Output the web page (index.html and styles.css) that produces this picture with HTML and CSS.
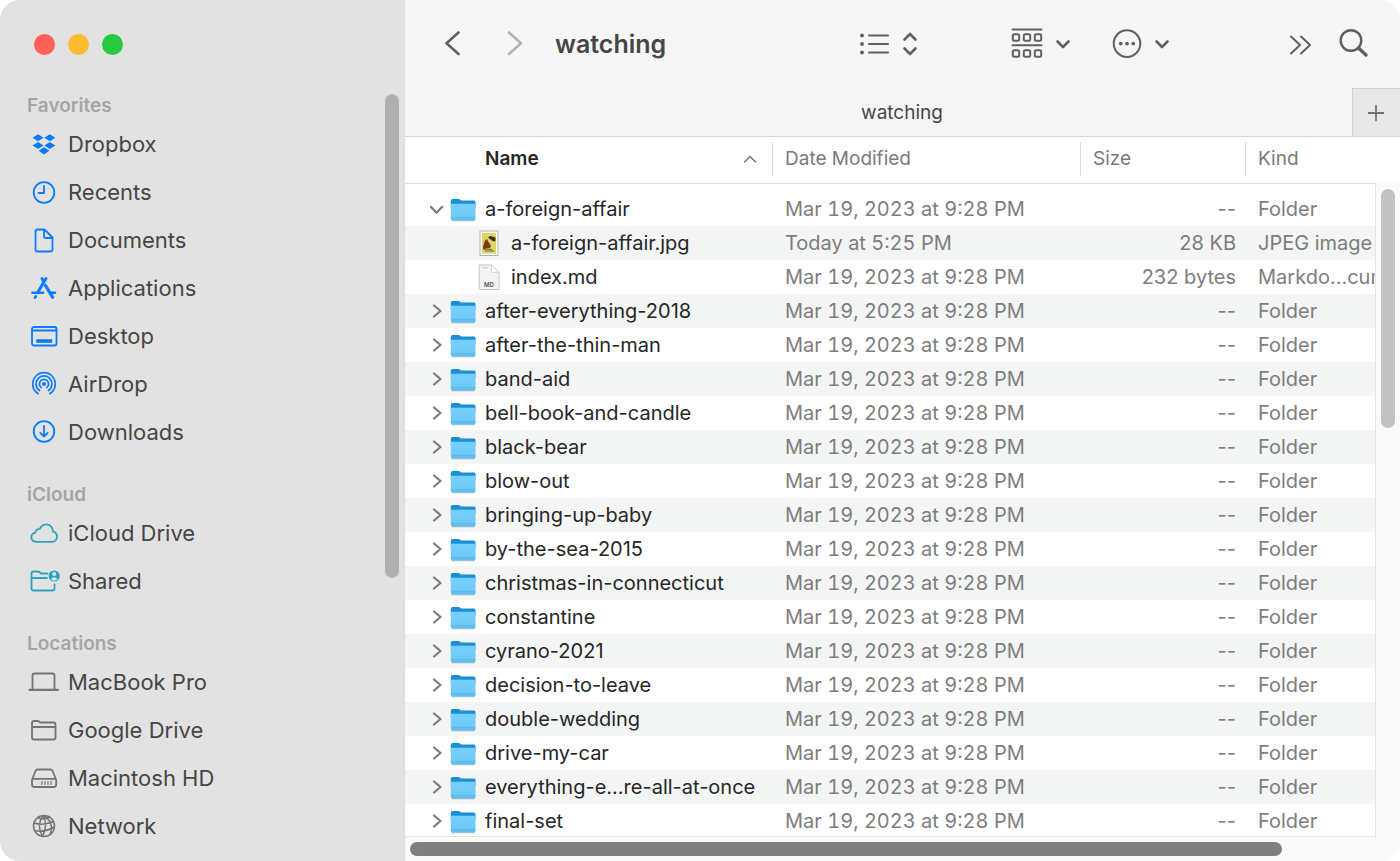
FILE: index.html
```html
<!DOCTYPE html>
<html lang="en">
<head>
<meta charset="utf-8">
<meta name="viewport" content="width=device-width, initial-scale=1">
<title>watching</title>
<link rel="stylesheet" href="styles.css">
</head>
<body>
<svg class="defs" width="0" height="0" aria-hidden="true">
  <defs>
    <linearGradient id="folder-front" x1="0" y1="0" x2="0" y2="1">
      <stop offset="0" stop-color="#79cffb"/><stop offset="0.7" stop-color="#6fcbfa"/><stop offset="1" stop-color="#5fbdee"/>
    </linearGradient>
    <symbol id="folder" viewBox="0 0 26 26">
      <path d="M1.5 24.7h23.4" stroke="#8f9aa0" stroke-width="1.2" opacity=".6"/>
      <path d="M.8 4.7Q.8 2.900 2.500 2.900H8.300Q9.300 2.900 10 3.600L11 4.600H24Q25.500 4.600 25.500 6.100V12H.8Z" fill="#1b8fd6"/>
      <path d="M.8 7.700H25.500V22.700Q25.500 24.400 23.800 24.400H2.500Q.8 24.400 .8 22.700Z" fill="url(#folder-front)"/>
      <path d="M1 21.700H25.300" stroke="#52b3e6" stroke-width=".7"/>
    </symbol>
    <symbol id="closed" viewBox="0 0 14 14"><path d="M4 1.500 10.500 7 4 12.500" fill="none" stroke="currentColor" stroke-width="2.200" stroke-linecap="round" stroke-linejoin="round"/></symbol>
    <symbol id="open" viewBox="0 0 14 14"><path d="M.8 4.800 6.500 10.800 12.200 4.800" fill="none" stroke="currentColor" stroke-width="2.200" stroke-linecap="round" stroke-linejoin="round"/></symbol>
    <symbol id="jpeg" viewBox="0 0 26 28">
      <rect x="4" y="2" width="18" height="24.500" fill="#fff" stroke="#b5b5b0" stroke-width="1"/>
      <rect x="5.800" y="3.800" width="14.400" height="20.800" fill="#ddd463"/>
      <path d="M7 17.500 9 11.500 11 10 12.500 13 15 16.500 14 19 10 19.500 7.500 21Z" fill="#7c3a25"/>
      <path d="M12 8.500 14.500 7 19.500 8.500V12.500L16.500 12Z" fill="#3b3420"/>
      <path d="M9 22H18M8 20 16 20.500" stroke="#66703a" stroke-width="1.200"/>
    </symbol>
    <symbol id="markdown" viewBox="0 0 26 28">
      <path d="M3.200 2H15.500L23 9.500V25.700Q23 26.500 22.200 26.500H4Q3.200 26.500 3.200 25.700Z" fill="#f5f5f5" stroke="#c2c2c2"/>
      <path d="M15.500 2V8.300Q15.500 9.500 16.700 9.500H23Z" fill="#fff" stroke="#cfcfcf" stroke-width=".8"/>
      <path d="M6 4.800H12" stroke="#c6c6c6"/>
      <text x="13" y="23.500" text-anchor="middle" class="md-mark">MD</text>
    </symbol>
  </defs>
</svg>

<div class="window">
  <aside class="sidebar">
    <div class="lights">
      <button class="light close" aria-label="Close"></button>
      <button class="light minimize" aria-label="Minimize"></button>
      <button class="light zoom" aria-label="Zoom"></button>
    </div>
    <div class="side-body">
      <nav class="nav" aria-label="Sidebar">
        <h2 class="group">Favorites</h2>
        <ul class="places blue">
          <li><a class="place" href="#"><svg class="ico" viewBox="0 0 32 28" fill="currentColor"><path d="M10 4.300 15.500 7.800 10 11.300 4.500 7.800ZM21.800 4.300 27.300 7.800 21.800 11.300 16.300 7.800ZM10 12 15.500 15.500 10 19 4.500 15.500ZM21.800 12 27.300 15.500 21.800 19 16.300 15.500ZM16 17.200 21.400 20.800 16 24.400 10.600 20.800Z"/></svg>Dropbox</a></li>
          <li><a class="place" href="#"><svg class="ico line" viewBox="0 0 32 28"><circle cx="16" cy="14.500" r="10.300"/><path d="M16 8V15H10.500"/></svg>Recents</a></li>
          <li><a class="place" href="#"><svg class="ico line" viewBox="0 0 32 28"><path d="M9.500 3.500H16.500L24.500 11.500V23.500Q24.500 25.500 22.500 25.500H9.500Q7.500 25.500 7.500 23.500V5.500Q7.500 3.500 9.500 3.500Z"/><path d="M16 4V10.500Q16 12 17.500 12H24"/></svg>Documents</a></li>
          <li><a class="place" href="#"><svg class="ico line" viewBox="0 0 32 28"><path d="M14 4.500 16 8M18 4.500 9.500 18.800" stroke-width="3"/><path d="M4.500 18.800H15M23.500 18.800H27" stroke-width="2.600"/><path d="M17.500 11.500 24.600 23.200" stroke-width="3.200"/><path d="M7.700 22.400 7 23.600" stroke-width="2.800"/></svg>Applications</a></li>
          <li><a class="place" href="#"><svg class="ico line" viewBox="0 0 32 28"><rect x="4" y="5" width="24.500" height="18.500" rx="2"/><path d="M4 8.500H28.500"/><path d="M8.300 19H24.200" stroke-width="3.600" stroke-linecap="butt"/></svg>Desktop</a></li>
          <li><a class="place" href="#"><svg class="ico line" viewBox="0 0 32 28"><circle cx="16" cy="14" r="2" fill="currentColor" stroke="none"/><path d="M13.100 17.500A4.600 4.600 0 1 1 18.900 17.500M11.500 20.500A8 8 0 1 1 20.500 20.500M10.200 23.700A11.300 11.300 0 1 1 21.800 23.700" stroke-width="1.700"/></svg>AirDrop</a></li>
          <li><a class="place" href="#"><svg class="ico line" viewBox="0 0 32 28"><circle cx="16" cy="13.500" r="10.300"/><path d="M16 8V18.300M12.300 14.800 16 18.500 19.700 14.800"/></svg>Downloads</a></li>
        </ul>
        <h2 class="group">iCloud</h2>
        <ul class="places teal">
          <li><a class="place" href="#"><svg class="ico line" viewBox="0 0 32 28"><path d="M8.500 22.800Q3.300 22.500 3.300 18.300Q3.500 14.500 7.300 13.700Q7.800 9.700 11.800 9.800Q14 5.200 18.500 5.300Q24.300 5.900 25 12.300Q29.200 13.800 29 18Q28.500 22.600 24 22.800Z"/></svg>iCloud Drive</a></li>
          <li><a class="place" href="#"><svg class="ico line" viewBox="0 0 32 28"><path d="M19.500 6.500H13Q11.500 4.500 9.500 4.500H5.500Q3.500 4.500 3.500 6.500V21.500Q3.500 23.500 5.500 23.500H24.500Q26.500 23.500 26.500 21.500V17.500M3.500 11H19"/><circle cx="26.200" cy="9" r="5.600" fill="currentColor" stroke="none"/><circle cx="26.200" cy="7" r="2" fill="#e2e2e2" stroke="none"/><path d="M22.800 12.300Q26.200 8.300 29.600 12.300Q26.200 15 22.800 12.300Z" fill="#e2e2e2" stroke="none"/></svg>Shared</a></li>
        </ul>
        <h2 class="group">Locations</h2>
        <ul class="places gray">
          <li><a class="place" href="#"><svg class="ico line" viewBox="0 0 32 28"><path d="M4.500 21V7.500Q4.500 5.500 6.500 5.500H24.500Q26.500 5.500 26.500 7.500V21"/><path d="M1.500 21.800H30" stroke-width="2.200"/></svg>MacBook Pro</a></li>
          <li><a class="place" href="#"><svg class="ico line" viewBox="0 0 32 28"><path d="M4 7Q4 5 6 5H9.500Q11 5 12.500 6.500H25.500Q27.500 6.500 27.500 8.500V21.500Q27.500 23.500 25.500 23.500H6Q4 23.500 4 21.500ZM4 11H27.500"/></svg>Google Drive</a></li>
          <li><a class="place" href="#"><svg class="ico line" viewBox="0 0 32 28"><path d="M9.500 5.500H22.500Q24 5.500 24.600 7L28.200 16V20.500Q28.200 23 25.700 23H6.500Q4 23 4 20.500V16L7.500 7Q8 5.500 9.500 5.500ZM4.500 14.800H27.700"/><path d="M14 17.500V20.500M17 17.500V20.500M20 17.500V20.500M23 17.500V20.500" stroke-width="1.200"/></svg>Macintosh HD</a></li>
          <li><a class="place" href="#"><svg class="ico line" viewBox="0 0 32 28"><g stroke-width="1.500"><circle cx="16" cy="14" r="10.500"/><path d="M15 3.700Q8 13 14.500 24.300M15 3.700Q20.500 13 14.500 24.300M15 3.700Q27 9.500 22 22.500M6 11Q15 14 25.500 9.500M6.500 18.500Q16 21 26.300 15M10 5.500Q15 8.500 21.500 5"/></g></svg>Network</a></li>
        </ul>
      </nav>
      <div class="side-scroll"><div class="thumb side-thumb"></div></div>
    </div>
  </aside>

  <main class="main">
    <header class="toolbar">
      <button class="tool back" aria-label="Back"><svg width="16" height="28" viewBox="0 0 16 28"><path d="M13.500 2.500 1.500 13.300 13.500 24"/></svg></button>
      <button class="tool forward" aria-label="Forward" disabled><svg width="16" height="28" viewBox="0 0 16 28"><path d="M2 2.500 14 13.300 2 24"/></svg></button>
      <h1 class="title">watching</h1>
      <button class="tool view" aria-label="View as list">
        <svg width="30" height="30" viewBox="0 0 30 30"><path d="M9 6.500H28M9 15H28M9 23.500H28" stroke-width="2"/><g class="dots"><circle cx="2" cy="6.500" r="1.900"/><circle cx="2" cy="15" r="1.900"/><circle cx="2" cy="23.500" r="1.900"/></g></svg>
        <svg width="16" height="30" viewBox="0 0 16 30"><path d="M2.500 10.500 8 5 13.500 10.500M2.500 19.500 8 25 13.500 19.500"/></svg>
      </button>
      <button class="tool arrange" aria-label="Group items">
        <svg width="32" height="32" viewBox="0 0 32 32"><g stroke-width="2"><path d="M1.500 1.500H30.500M1.500 17.300H30.500"/><rect x="1.800" y="6.300" width="6.400" height="6.400" rx="1.500"/><rect x="12.800" y="6.300" width="6.400" height="6.400" rx="1.500"/><rect x="23.800" y="6.300" width="6.400" height="6.400" rx="1.500"/><rect x="1.800" y="22.300" width="6.400" height="6.400" rx="1.500"/><rect x="12.800" y="22.300" width="6.400" height="6.400" rx="1.500"/><rect x="23.800" y="22.300" width="6.400" height="6.400" rx="1.500"/></g></svg>
        <svg width="16" height="16" viewBox="0 0 16 16"><path d="M2.500 5.500 8 11 13.500 5.500"/></svg>
      </button>
      <button class="tool more" aria-label="More actions">
        <svg width="30" height="30" viewBox="0 0 30 30"><circle cx="15" cy="14.600" r="13.300" stroke-width="2"/><g class="dots"><circle cx="8.700" cy="14.600" r="1.900"/><circle cx="15" cy="14.600" r="1.900"/><circle cx="21.300" cy="14.600" r="1.900"/></g></svg>
        <svg width="16" height="16" viewBox="0 0 16 16"><path d="M2.500 5.500 8 11 13.500 5.500"/></svg>
      </button>
      <button class="tool overflow" aria-label="Show more"><svg width="22" height="28" viewBox="0 0 22 28"><path d="M2 6.500 11 15 2 23.500M12 6.500 21 15 12 23.500" stroke-width="2"/></svg></button>
      <button class="tool" aria-label="Search"><svg width="30" height="30" viewBox="0 0 30 30"><circle cx="12" cy="11.500" r="10.300" stroke-width="2.400"/><path d="M19.500 19 27 26" stroke-width="3.400"/></svg></button>
    </header>
    <div class="tabs">
      <button class="tab">watching</button>
      <button class="tab-add" aria-label="New tab"><svg width="20" height="20" viewBox="0 0 20 20"><path d="M9 2V18M1 10H17"/></svg></button>
    </div>
    <div class="content">
      <div class="list">
        <table class="files">
          <colgroup><col class="c-name"><col class="c-date"><col class="c-size"><col class="c-kind"></colgroup>
          <thead>
            <tr>
              <th scope="col"><button class="head head-name">Name<svg width="14" height="10" viewBox="0 0 14 10"><path d="M1.500 8 7 2.500 12.500 8" fill="none" stroke="#777" stroke-width="1.500" stroke-linecap="round"/></svg></button></th>
              <th scope="col"><button class="head">Date Modified</button></th>
              <th scope="col"><button class="head">Size</button></th>
              <th scope="col"><button class="head">Kind</button></th>
            </tr>
          </thead>
          <tbody id="rows"></tbody>
        </table>
      </div>
      <div class="v-scroll"><div class="thumb v-thumb"></div></div>
      <div class="h-scroll"><div class="thumb h-thumb"></div></div>
    </div>
  </main>
</div>
<script src="files.js"></script>
</body>
</html>
```
FILE: files.js
```js
const stamp = "Mar 19, 2023 at 9:28 PM";
const entries = [
  { name: "a-foreign-affair", open: true },
  { name: "a-foreign-affair.jpg", icon: "jpeg", date: "Today at 5:25 PM", size: "28 KB", kind: "JPEG image" },
  { name: "index.md", icon: "markdown", size: "232 bytes", kind: "Markdo...cument" },
  ...[
    "after-everything-2018", "after-the-thin-man", "band-aid", "bell-book-and-candle",
    "black-bear", "blow-out", "bringing-up-baby", "by-the-sea-2015",
    "christmas-in-connecticut", "constantine", "cyrano-2021", "decision-to-leave",
    "double-wedding", "drive-my-car", "everything-e...re-all-at-once", "final-set"
  ].map(name => ({ name }))
];

document.getElementById("rows").innerHTML = entries.map(e => {
  const lead = e.icon
    ? `<svg class="file-ico" aria-hidden="true"><use href="#${e.icon}"/></svg>`
    : `<button class="toggle" aria-label="Toggle ${e.name}" aria-expanded="${Boolean(e.open)}"><svg width="14" height="14"><use href="#${e.open ? "open" : "closed"}"/></svg></button><svg class="folder-ico" aria-hidden="true"><use href="#folder"/></svg>`;
  return `<tr>
    <td><div class="name${e.icon ? " child" : ""}">${lead}<span>${e.name}</span></div></td>
    <td class="date">${e.date || stamp}</td>
    <td class="size">${e.size || "--"}</td>
    <td>${e.kind || "Folder"}</td>
  </tr>`;
}).join("");
```
FILE: styles.css
```css
* { box-sizing: border-box; }

body {
  margin: 0;
  background: #fff;
  color: #262626;
  font-family: Inter, "Liberation Sans", sans-serif;
  font-size: 20px;
}

button {
  padding: 0;
  border: 0;
  background: none;
  color: inherit;
  font: inherit;
}

svg { display: block; flex: none; }
.defs { position: absolute; }

.window {
  display: flex;
  height: 100vh;
  overflow: hidden;
  border-radius: 20px;
}

/* Sidebar */
.sidebar {
  display: flex;
  flex: none;
  flex-direction: column;
  width: 405px;
  background: #e2e2e2;
  border-right: 1px solid #dcdcdc;
}

.lights {
  display: flex;
  flex: none;
  gap: 13px;
  align-items: center;
  height: 88px;
  padding-left: 34px;
}

.light {
  width: 21px;
  height: 21px;
  border-radius: 50%;
}
.close { background: #fe5f57; }
.minimize { background: #febc2e; }
.zoom { background: #28c840; }

.side-body {
  display: flex;
  flex: 1;
  min-height: 0;
}
.nav { flex: 1; overflow: hidden; }
.side-scroll { width: 20px; padding: 6px 0 0 1px; }
.thumb { border-radius: 7px; }
.side-thumb { width: 14px; height: 484px; background: #b0b0b0; }

.group {
  margin: 0;
  padding: 4px 27px 0;
  color: #a5a5a5;
  font-size: 19px;
  font-weight: 600;
  line-height: 28px;
}

.places {
  margin: 0;
  padding: 0 0 21px;
  list-style: none;
}

.place {
  display: flex;
  gap: 8px;
  align-items: center;
  height: 48px;
  padding-left: 28px;
  color: #464646;
  font-size: 22px;
  text-decoration: none;
  white-space: nowrap;
}

.ico { width: 32px; height: 28px; }
.blue .ico { color: #0a7aff; }
.teal .ico { color: #2ba5bd; }
.gray .ico { color: #747474; }
.line {
  fill: none;
  stroke: currentColor;
  stroke-width: 1.800;
  stroke-linecap: round;
  stroke-linejoin: round;
}

/* Toolbar and tabs */
.main {
  display: flex;
  flex: 1;
  flex-direction: column;
  min-width: 0;
  background: #f6f6f6;
}

.toolbar {
  display: flex;
  flex: none;
  align-items: center;
  height: 88px;
  padding: 0 31px 0 40px;
  color: #606060;
}

.tool { display: flex; align-items: center; }
.tool svg {
  fill: none;
  stroke: currentColor;
  stroke-width: 2.600;
  stroke-linecap: round;
  stroke-linejoin: round;
}
.tool .dots { fill: currentColor; stroke: none; }
.forward { margin-left: 46px; color: #b4b4b4; }
.title {
  flex: 1;
  margin: 0 0 0 32px;
  color: #464646;
  font-size: 25px;
  font-weight: 600;
}
.view { gap: 12px; }
.arrange { gap: 12px; margin-left: 93px; }
.more { gap: 12px; margin-left: 41px; }
.overflow { margin: 0 28px 0 119px; }

.tabs {
  display: flex;
  flex: none;
  height: 49px;
  border-bottom: 1px solid #d6d6d6;
}
.tab {
  flex: 1;
  padding-left: 47px;
  color: #464646;
  font-size: 19px;
}
.tab-add {
  display: grid;
  place-items: center;
  width: 48px;
  border: solid #d0d0d0;
  border-width: 1px 0 0 1px;
  background: #e7e7e7;
}
.tab-add svg { stroke: #707070; stroke-width: 1.800; }

/* File list */
.content {
  display: grid;
  flex: 1;
  grid-template: minmax(0, 1fr) 24px / minmax(0, 1fr) 25px;
  min-height: 0;
  background: #fff;
}

.list {
  overflow: hidden;
  border-bottom: 1px solid #e4e4e4;
}

.files {
  width: 100%;
  border-collapse: collapse;
  table-layout: fixed;
}
.c-name { width: 367px; }
.c-date { width: 308px; }
.c-size { width: 165px; }

th {
  height: 46px;
  padding: 0 0 2px;
  border-bottom: 1px solid #dedede;
  color: #7a7a7a;
  font-weight: 400;
}
.head {
  display: flex;
  align-items: center;
  width: 100%;
  height: 34px;
  padding-left: 12px;
  border-left: 1px solid #dcdcdc;
  font-size: 19px;
}
.head-name {
  justify-content: space-between;
  padding: 0 15px 0 80px;
  border: 0;
  color: #262626;
  font-weight: 600;
}

tbody::before {
  content: "";
  display: block;
  height: 8px;
}
tbody tr:nth-child(even) { background: #f4f5f5; }
td {
  height: 34px;
  padding: 0 0 0 13px;
  color: #7d7d7d;
  line-height: 34px;
  white-space: nowrap;
}
td:first-child { padding: 0; color: #262626; }
td:last-child { overflow: hidden; }
.date { font-variant-numeric: tabular-nums; }
td.size { padding: 0 9px 0 0; text-align: right; }

.name {
  display: flex;
  align-items: center;
  padding-left: 25px;
}
.child { gap: 9px; padding-left: 71px; }
.toggle { margin-right: 6px; color: #7c7c7c; }
.folder-ico { width: 26px; height: 26px; margin-right: 9px; }
.file-ico { width: 26px; height: 28px; }
.md-mark { fill: #555; font-size: 6px; font-weight: 600; }

.v-scroll {
  margin-top: 46px;
  padding: 6px 0 0 5px;
  border-left: 1px solid #e4e4e4;
  background: #fafafa;
}
.v-thumb { width: 14px; height: 239px; background: #c2c2c2; }
.h-scroll { grid-column: 1 / -1; padding: 5px; background: #fafafa; }
.h-thumb { width: 88.5%; height: 14px; background: #7f7f7f; }
```
